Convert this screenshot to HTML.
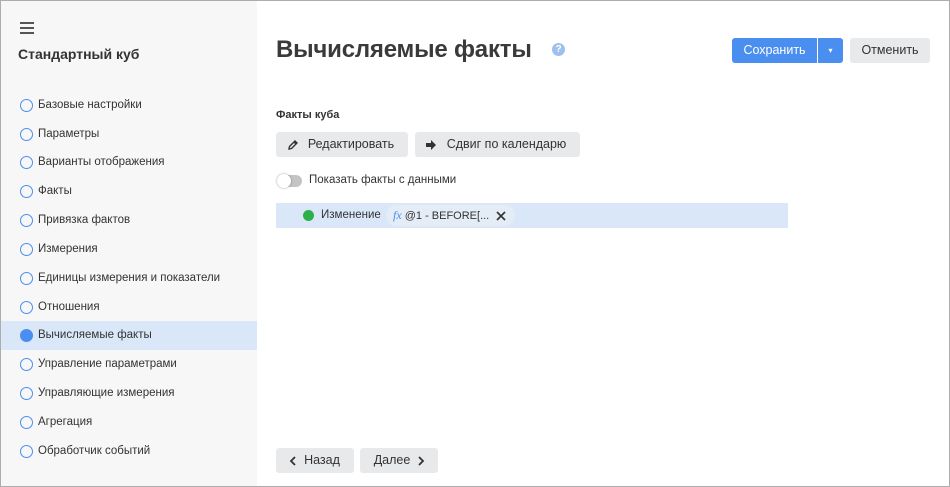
<!DOCTYPE html>
<html><head><meta charset="utf-8"><style>
*{box-sizing:border-box;margin:0;padding:0}
body{width:950px;height:487px;font-family:"Liberation Sans",sans-serif;color:#333;background:#fff;position:relative;overflow:hidden}
.frame{position:absolute;left:0;top:0;width:950px;height:487px;border:1px solid #adadad;pointer-events:none;z-index:10}
.side{position:absolute;left:1px;top:1px;width:256px;height:485px;background:#f7f7f7}
.ham{position:absolute;left:19px;top:21px;width:14px}
.ham i{display:block;height:2px;background:#555;margin-bottom:3px}
.stitle{position:absolute;left:17px;top:45px;font-size:14px;font-weight:bold;color:#333}
.item{position:absolute;left:0;width:256px;height:29px;font-size:11.5px;line-height:29px;padding-left:37px;color:#333}
.item:before{content:"";position:absolute;left:19px;top:8px;width:13px;height:13px;border:1.5px solid #4a8ef0;border-radius:50%;box-sizing:border-box}
.item.act{background:#d9e7f9}
.item.act:before{background:#4a8ef0}
h1{position:absolute;left:276px;top:36px;font-size:24px;font-weight:bold;color:#3a3a3a;letter-spacing:-0.2px}
.q{position:absolute;left:552px;top:43px;width:13px;height:13px;border-radius:50%;background:#9ec0ef;color:#fff;font-size:10px;font-weight:bold;text-align:center;line-height:13px}
.btn{position:absolute;height:25px;border-radius:3px;background:#e8e9ea;font-size:12.5px;line-height:25px;color:#333;text-align:center}
.blue{background:#4a8ef0;color:#fff}
.lbl{position:absolute;left:276px;top:109px;font-size:11px;font-weight:bold;color:#333}
.tog{position:absolute;left:277px;top:175px;width:25px;height:12px;border-radius:6px;background:#c4c4c4}
.tog:after{content:"";position:absolute;left:0;top:-1px;width:14px;height:14px;border-radius:50%;background:#fff;box-shadow:0 0 2px rgba(0,0,0,.4)}
.row{position:absolute;left:276px;top:203px;width:512px;height:25px;background:#d9e7f9}
</style></head><body>
<div class="side">
<div class="ham"><i></i><i></i><i></i></div>
<div class="stitle">Стандартный куб</div>
<div class="item" style="top:90px">Базовые настройки</div>
<div class="item" style="top:119px">Параметры</div>
<div class="item" style="top:147px">Варианты отображения</div>
<div class="item" style="top:176px">Факты</div>
<div class="item" style="top:205px">Привязка фактов</div>
<div class="item" style="top:234px">Измерения</div>
<div class="item" style="top:263px">Единицы измерения и показатели</div>
<div class="item" style="top:292px">Отношения</div>
<div class="item act" style="top:320px">Вычисляемые факты</div>
<div class="item" style="top:349px">Управление параметрами</div>
<div class="item" style="top:378px">Управляющие измерения</div>
<div class="item" style="top:407px">Агрегация</div>
<div class="item" style="top:436px">Обработчик событий</div>
</div>
<h1>Вычисляемые факты</h1>
<div class="q">?</div>
<div class="btn blue" style="left:732px;top:38px;width:85px;border-radius:3px 0 0 3px">Сохранить</div>
<div class="btn blue" style="left:818px;top:38px;width:25px;border-radius:0 3px 3px 0;font-size:8px">▾</div>
<div class="btn" style="left:850px;top:38px;width:80px">Отменить</div>
<div class="lbl">Факты куба</div>
<div class="btn" style="left:276px;top:132px;width:132px"><svg width="12" height="12" viewBox="0 0 12 12" style="position:absolute;left:11px;top:7px"><path d="M2 10l0.5-2.5L8 2l2 2-5.5 5.5z M7 3l2 2" fill="none" stroke="#333" stroke-width="1.4"/></svg><span style="padding-left:18px">Редактировать</span></div>
<div class="btn" style="left:415px;top:132px;width:165px"><svg width="12" height="12" viewBox="0 0 12 12" style="position:absolute;left:10px;top:7px"><path d="M1 4h5V1l5 5-5 5V8H1z" fill="#333"/></svg><span style="padding-left:18px">Сдвиг по календарю</span></div>
<div class="tog"></div>
<div style="position:absolute;left:309px;top:174px;font-size:11.5px">Показать факты с данными</div>
<div class="row">
<div style="position:absolute;left:27px;top:7px;width:11px;height:11px;border-radius:50%;background:#2bb04a"></div>
<div style="position:absolute;left:45px;top:6px;font-size:11.5px">Изменение</div>
<div style="position:absolute;left:110px;top:2px;width:129px;height:21px;border-radius:11px;background:#e4ecf6;font-size:11px;line-height:21px;padding-left:7px;text-align:left"><i style="color:#4a8ef0;font-family:'Liberation Serif',serif;font-size:12px">fx</i> @1 - BEFORE[...<svg width="10" height="10" viewBox="0 0 10 10" style="position:absolute;right:9px;top:6px"><path d="M1 1l8 8M9 1l-8 8" stroke="#333" stroke-width="1.6"/></svg></div>
</div>
<div class="btn" style="left:276px;top:448px;width:78px;padding-left:14px"><svg width="8" height="10" viewBox="0 0 8 10" style="position:absolute;left:13px;top:8px"><path d="M6 1L2 5l4 4" fill="none" stroke="#333" stroke-width="1.8"/></svg>Назад</div>
<div class="btn" style="left:360px;top:448px;width:78px;padding-right:14px">Далее<svg width="8" height="10" viewBox="0 0 8 10" style="position:absolute;right:13px;top:8px"><path d="M2 1l4 4-4 4" fill="none" stroke="#333" stroke-width="1.8"/></svg></div>
<div class="frame"></div>
</body></html>
